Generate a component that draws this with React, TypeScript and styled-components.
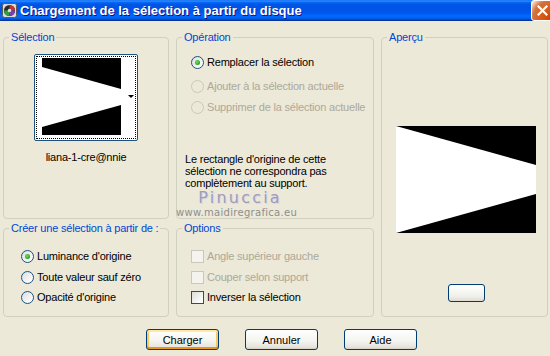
import styled, { createGlobalStyle, css } from "styled-components";

const GlobalStyle = createGlobalStyle`
  html, body {
    margin: 0;
    padding: 0;
    background: #ece9d8;
  }
  body {
    font-family: "Liberation Sans", Arial, sans-serif;
    font-size: 11px;
    letter-spacing: -0.2px;
    color: #000000;
  }
`;

const Window = styled.div`
  position: relative;
  width: 550px;
  height: 356px;
  overflow: hidden;
  background: #ece9d8;
`;

const TitleBar = styled.div`
  height: 21px;
  display: flex;
  align-items: center;
  gap: 3px;
  padding-left: 2px;
  background: linear-gradient(
    to bottom,
    #0058ee 0%,
    #3593ff 4%,
    #288eff 6%,
    #127dff 8%,
    #036ffc 10%,
    #0262ee 14%,
    #0057e5 20%,
    #0054e3 24%,
    #0055eb 56%,
    #005bf5 66%,
    #026afe 76%,
    #0062ef 86%,
    #0052d6 92%,
    #0040ab 94%,
    #003092 100%
  );
`;

const TitleText = styled.span`
  font-family: "Liberation Sans", Arial, sans-serif;
  font-weight: bold;
  font-size: 13px;
  letter-spacing: 0;
  color: #ffffff;
  text-shadow: 1px 1px #0f1089;
  white-space: nowrap;
`;

const CloseButton = styled.div`
  margin-left: auto;
  margin-right: -4px;
  width: 21px;
  height: 19px;
  border: 1px solid #ffffff;
  border-radius: 3px;
  display: flex;
  align-items: center;
  justify-content: center;
  background: radial-gradient(circle at 90% 90%, #cc4600 0%, #dc6527 55%, #cd7546 70%, #ffccb2 90%, #ffffff 100%);
`;

const Body = styled.div`
  padding: 10px 0 0 3px;
`;

const Grid = styled.div`
  display: grid;
  grid-template-columns: 166px 198px 167px;
  grid-template-rows: 188px 95px;
  column-gap: 7px;
  row-gap: 3px;
`;

const Group = styled.fieldset<{ $span?: boolean }>`
  margin: 0;
  padding: 0;
  min-width: 0;
  border: 1px solid #d0d0bf;
  border-radius: 4px;
  display: flex;
  flex-direction: column;
  ${(p) =>
    p.$span &&
    css`
      grid-row: 1 / span 2;
      grid-column: 3;
    `}
`;

const Legend = styled.legend`
  margin-left: 5px;
  padding: 0 2px;
  color: #0046d5;
  font-size: 11px;
  line-height: 13px;
`;

const SelectionBody = styled.div`
  display: flex;
  flex-direction: column;
  align-items: center;
  padding-top: 10px;
`;

const Thumb = styled.div`
  width: 100px;
  height: 83px;
  border: 1px solid #1c5180;
  border-radius: 2px;
  padding: 1px;
  background: #ffffff;
`;

const ThumbInner = styled.div`
  position: relative;
  height: 100%;
  border: 1px dotted #000000;
  display: flex;
  padding: 1px 0 1px 5px;
  box-sizing: border-box;
`;

const ThumbArrow = styled.span`
  position: absolute;
  right: 1px;
  top: 38px;
  width: 0;
  height: 0;
  border-left: 3px solid transparent;
  border-right: 3px solid transparent;
  border-top: 3px solid #000000;
`;

const Caption = styled.div`
  margin-top: 10px;
  line-height: 13px;
`;

const OpBody = styled.div`
  display: flex;
  flex-direction: column;
  padding: 12px 0 0 14px;
`;

const OptionList = styled.div<{ $gap: number }>`
  display: flex;
  flex-direction: column;
  gap: ${(p) => p.$gap}px;
`;

const OptionRow = styled.label<{ $disabled?: boolean; $extra?: number }>`
  display: flex;
  align-items: center;
  gap: 3px;
  height: 13px;
  line-height: 13px;
  white-space: nowrap;
  color: ${(p) => (p.$disabled ? "#aca899" : "#000000")};
  margin-bottom: ${(p) => p.$extra ?? 0}px;
`;

const Radio = styled.span<{ $checked?: boolean; $disabled?: boolean }>`
  width: 13px;
  height: 13px;
  box-sizing: border-box;
  border-radius: 50%;
  flex: none;
  display: flex;
  align-items: center;
  justify-content: center;
  border: 1px solid ${(p) => (p.$disabled ? "#cac8bb" : "#1c5180")};
  background: ${(p) =>
    p.$disabled ? "transparent" : "linear-gradient(135deg, #dcdcd7 0%, #ffffff 90%)"};
  &::after {
    content: "";
    display: ${(p) => (p.$checked ? "block" : "none")};
    width: 5px;
    height: 5px;
    border-radius: 50%;
    background: radial-gradient(circle at 40% 40%, #6fe26b 0%, #21a121 70%, #1c8a1c 100%);
  }
`;

const Check = styled.span<{ $disabled?: boolean }>`
  width: 13px;
  height: 13px;
  box-sizing: border-box;
  flex: none;
  border: 1px solid ${(p) => (p.$disabled ? "#cac8bb" : "#1c5180")};
  background: ${(p) =>
    p.$disabled ? "#f4f3ee" : "linear-gradient(135deg, #dcdcd7 0%, #ffffff 90%)"};
`;

const Note = styled.p`
  margin: 39px 0 0 -6px;
  line-height: 12px;
  width: 180px;
`;

const BottomBody = styled.div<{ $left: number }>`
  padding: 15px 0 0 ${(p) => p.$left}px;
`;

const PreviewBody = styled.div`
  display: flex;
  flex-direction: column;
  align-items: center;
  padding-top: 82px;
`;

const Preview = styled.div`
  width: 140px;
  height: 107px;
  display: flex;
  margin-left: 2px;
`;

const SmallButton = styled.div`
  margin: 51px 0 0 4px;
  width: 37px;
  height: 18px;
  box-sizing: border-box;
  border: 1px solid #003c74;
  border-radius: 3px;
  background: linear-gradient(#ffffff 0%, #f0f0ea 70%, #dedbd2 100%);
`;

const ButtonRow = styled.div`
  display: flex;
  gap: 26px;
  padding: 12px 0 0 143px;
`;

const Button = styled.div<{ $default?: boolean }>`
  width: 73px;
  height: 21px;
  box-sizing: border-box;
  border: 1px solid #003c74;
  border-radius: 3px;
  display: flex;
  align-items: center;
  justify-content: center;
  letter-spacing: 0;
  background: linear-gradient(#ffffff 0%, #f3f3ef 60%, #e6e4db 90%, #d6d0c5 100%);
  ${(p) =>
    p.$default &&
    css`
      box-shadow: inset 0 2px #ffe8a6, inset 0 -2px #e5971f, inset 2px 0 #f9c962, inset -2px 0 #f9c962;
    `}
`;

const Watermark = styled.div`
  position: absolute;
  left: 176px;
  top: 189px;
  display: flex;
  flex-direction: column;
  align-items: center;
  pointer-events: none;
`;

const Mark = styled.span<{ $big?: boolean }>`
  font-family: "DejaVu Sans", sans-serif;
  white-space: nowrap;
  ${(p) =>
    p.$big
      ? css`
          font-size: 16px;
          letter-spacing: 2.2px;
          line-height: 17px;
          color: #9e9cbc;
          text-shadow: 1px 1px #d8d6e6;
          margin-left: 7px;
        `
      : css`
          font-size: 10px;
          letter-spacing: 0.3px;
          line-height: 13px;
          color: #8e8e8e;
        `}
`;

const AppIcon = () => (
  <svg width="15" height="15" viewBox="0 0 15 15">
    <rect x="0.5" y="0.5" width="14" height="14" rx="2" fill="#d9d9d9" stroke="#5a5a5a" />
    <circle cx="7.5" cy="7.5" r="5.5" fill="#2a2a2a" />
    <path d="M7.5 2 A5.5 5.5 0 0 1 13 7.5 L7.5 7.5 Z" fill="#c0392b" />
    <path d="M2 7.5 A5.5 5.5 0 0 0 7.5 13 L7.5 7.5 Z" fill="#2e9e3e" />
    <path d="M7.5 13 A5.5 5.5 0 0 0 13 7.5 L7.5 7.5 Z" fill="#7a3fb0" />
    <circle cx="7.5" cy="7.5" r="1.8" fill="#e0e0e0" />
  </svg>
);

const CloseIcon = () => (
  <svg width="11" height="11" viewBox="0 0 11 11">
    <path d="M1.5 1.5 L9.5 9.5 M9.5 1.5 L1.5 9.5" stroke="#ffffff" strokeWidth="2.2" strokeLinecap="square" />
  </svg>
);

const Wedge = ({ w, h, pts }: { w: number; h: number; pts: string }) => (
  <svg width={w} height={h} viewBox={`0 0 ${w} ${h}`} style={{ display: "block" }}>
    <rect width={w} height={h} fill="#000000" />
    <polygon points={pts} fill="#ffffff" />
  </svg>
);

const App = () => {
  return (
    <Window>
      <GlobalStyle />
      <TitleBar>
        <AppIcon />
        <TitleText>Chargement de la sélection à partir du disque</TitleText>
        <CloseButton>
          <CloseIcon />
        </CloseButton>
      </TitleBar>
      <Body>
        <Grid>
          <Group>
            <Legend>Sélection</Legend>
            <SelectionBody>
              <Thumb>
                <ThumbInner>
                  <Wedge w={79} h={77} pts="0,9 79,31 79,47 0,69" />
                  <ThumbArrow />
                </ThumbInner>
              </Thumb>
              <Caption>liana-1-cre@nnie</Caption>
            </SelectionBody>
          </Group>

          <Group>
            <Legend>Opération</Legend>
            <OpBody>
              <OptionList $gap={8}>
                <OptionRow $extra={3}>
                  <Radio $checked />
                  Remplacer la sélection
                </OptionRow>
                <OptionRow $disabled>
                  <Radio $disabled />
                  Ajouter à la sélection actuelle
                </OptionRow>
                <OptionRow $disabled>
                  <Radio $disabled />
                  Supprimer de la sélection actuelle
                </OptionRow>
              </OptionList>
              <Note>
                Le rectangle d'origine de cette sélection ne correspondra pas complètement au support.
              </Note>
            </OpBody>
          </Group>

          <Group $span>
            <Legend>Aperçu</Legend>
            <PreviewBody>
              <Preview>
                <Wedge w={140} h={107} pts="0,0 140,39 140,68 0,107" />
              </Preview>
              <SmallButton />
            </PreviewBody>
          </Group>

          <Group>
            <Legend>Créer une sélection à partir de :</Legend>
            <BottomBody $left={17}>
              <OptionList $gap={7.5}>
                <OptionRow>
                  <Radio $checked />
                  Luminance d'origine
                </OptionRow>
                <OptionRow>
                  <Radio />
                  Toute valeur sauf zéro
                </OptionRow>
                <OptionRow>
                  <Radio />
                  Opacité d'origine
                </OptionRow>
              </OptionList>
            </BottomBody>
          </Group>

          <Group>
            <Legend>Options</Legend>
            <BottomBody $left={14}>
              <OptionList $gap={7.5}>
                <OptionRow $disabled>
                  <Check $disabled />
                  Angle supérieur gauche
                </OptionRow>
                <OptionRow $disabled>
                  <Check $disabled />
                  Couper selon support
                </OptionRow>
                <OptionRow>
                  <Check />
                  Inverser la sélection
                </OptionRow>
              </OptionList>
            </BottomBody>
          </Group>
        </Grid>
        <ButtonRow>
          <Button $default>Charger</Button>
          <Button>Annuler</Button>
          <Button>Aide</Button>
        </ButtonRow>
      </Body>
      <Watermark>
        <Mark $big>Pinuccia</Mark>
        <Mark>www.maidiregrafica.eu</Mark>
      </Watermark>
    </Window>
  );
};

export default App;
